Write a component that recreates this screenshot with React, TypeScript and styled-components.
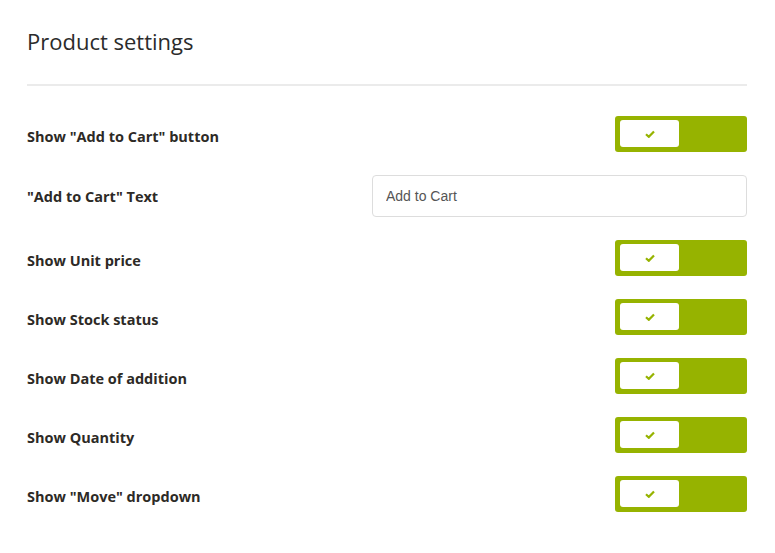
import React from "react";
import styled, { createGlobalStyle } from "styled-components";

const Global = createGlobalStyle`
  html, body { margin: 0; padding: 0; background: #fff; }
  body { font-family: "Open Sans", "Liberation Sans", sans-serif; color: #333; }
`;

const Page = styled.div`
  padding: 26px 28px 0 27px;
`;

const Title = styled.h2`
  margin: 0;
  font-size: 22px;
  font-weight: 400;
  line-height: 30px;
  color: #2b2b2b;
`;

const Divider = styled.hr`
  border: 0;
  height: 2px;
  background: #ebebeb;
  margin: 28px 0 30px;
`;

const List = styled.div`
  display: flex;
  flex-direction: column;
  gap: 23px;
`;

const Row = styled.div`
  display: flex;
  align-items: center;
  justify-content: space-between;
`;

const Label = styled.span<{ $shift?: boolean }>`
  font-size: 14.5px;
  font-weight: 700;
  color: #2d2a26;
  padding-top: ${(p) => (p.$shift ? "4px" : "0")};
`;

const TextInput = styled.input`
  box-sizing: border-box;
  width: 375px;
  height: 42px;
  border: 1px solid #ddd;
  border-radius: 4px;
  padding: 0 13px;
  font-family: "Liberation Sans", Arial, sans-serif;
  font-size: 14px;
  color: #555;
  outline: none;
`;

const Toggle = styled.div<{ $on: boolean }>`
  box-sizing: border-box;
  width: 132px;
  height: 36px;
  border-radius: 3px;
  background: ${(p) => (p.$on ? "#96b300" : "#ccc")};
  padding: 4px 5px;
  display: flex;
  justify-content: ${(p) => (p.$on ? "flex-start" : "flex-end")};
`;

const Knob = styled.div`
  width: 59px;
  height: 27px;
  border-radius: 3px;
  background: #fff;
  display: flex;
  align-items: center;
  justify-content: center;
`;

const Check = () => (
  <svg width="10" height="8" viewBox="0 0 10 8">
    <path d="M1 4.2 L3.8 6.8 L9 1.4" fill="none" stroke="#96b300" strokeWidth="2.2" />
  </svg>
);

const rows: { label: string; input?: string }[] = [
  { label: 'Show "Add to Cart" button' },
  { label: '"Add to Cart" Text', input: "Add to Cart" },
  { label: "Show Unit price" },
  { label: "Show Stock status" },
  { label: "Show Date of addition" },
  { label: "Show Quantity" },
  { label: 'Show "Move" dropdown' },
];

export default function App() {
  return (
    <>
      <Global />
      <Page>
        <Title>Product settings</Title>
        <Divider />
        <List>
          {rows.map((r) => (
            <Row key={r.label}>
              <Label $shift={!r.input}>{r.label}</Label>
              {r.input ? (
                <TextInput defaultValue={r.input} />
              ) : (
                <Toggle $on>
                  <Knob>
                    <Check />
                  </Knob>
                </Toggle>
              )}
            </Row>
          ))}
        </List>
      </Page>
    </>
  );
}
